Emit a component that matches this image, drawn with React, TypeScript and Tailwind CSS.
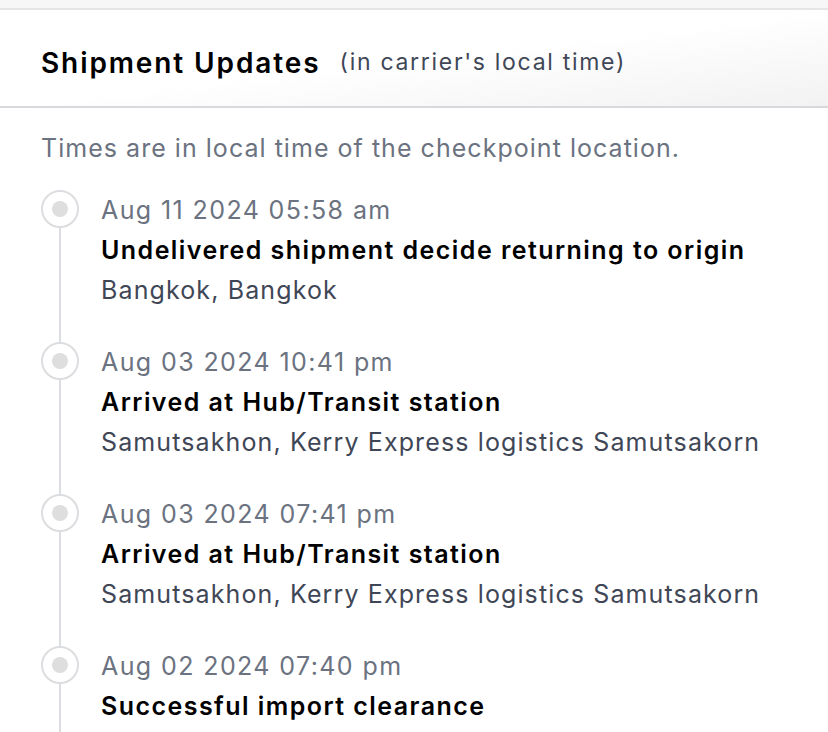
import React from 'react';

interface Checkpoint {
  date: string;
  title: string;
  location: string;
}

const checkpoints: Checkpoint[] = [
  { date: 'Aug 11 2024 05:58 am', title: 'Undelivered shipment decide returning to origin', location: 'Bangkok, Bangkok' },
  { date: 'Aug 03 2024 10:41 pm', title: 'Arrived at Hub/Transit station', location: 'Samutsakhon, Kerry Express logistics Samutsakorn' },
  { date: 'Aug 03 2024 07:41 pm', title: 'Arrived at Hub/Transit station', location: 'Samutsakhon, Kerry Express logistics Samutsakorn' },
  { date: 'Aug 02 2024 07:40 pm', title: 'Successful import clearance', location: 'Bangkok, Bangkok' },
];

function App() {
  return (
    <div className="h-[732px] overflow-hidden bg-white font-['Inter',sans-serif]">
      <div className="h-[10px] bg-[#f7f7f8] border-b-2 border-[#e6e6e9]" />
      <div className="h-[98px] flex items-center pt-[9px] px-[41px] bg-gradient-to-br from-white via-white to-[#f2f2f3] border-b-2 border-[#d9d9dd]">
        <h2 className="text-[28px] font-semibold text-black tracking-[1.9px]">Shipment Updates</h2>
        <span className="ml-[19px] text-[23px] text-[#3f4757] tracking-[1.7px]">(in carrier's local time)</span>
      </div>

      <div className="px-[41px] pt-[20px]">
        <p className="text-[25px] leading-[40px] text-[#6b7280] tracking-[1.03px]">
          Times are in local time of the checkpoint location.
        </p>

        <div className="mt-[22px]">
          {checkpoints.map((cp, i) => (
            <div key={i} className="flex">
              <div className="flex flex-col items-center w-[38px] shrink-0">
                <div className="w-[38px] h-[38px] rounded-full border-2 border-[#dcdde0] bg-white flex items-center justify-center">
                  <div className="w-[16px] h-[16px] rounded-full bg-[#dedede]" />
                </div>
                <div className="flex-1 w-[2px] bg-[#dcdde0]" />
              </div>
              <div className="ml-[22px] pb-[32px] text-[25px] leading-[40px]">
                <div className="text-[#6b7280] tracking-[1.4px]">{cp.date}</div>
                <div className="font-semibold text-black tracking-[1.45px]">{cp.title}</div>
                <div className="text-[#3f4757] tracking-[1.12px]">{cp.location}</div>
              </div>
            </div>
          ))}
        </div>
      </div>
    </div>
  );
}

export default App;
